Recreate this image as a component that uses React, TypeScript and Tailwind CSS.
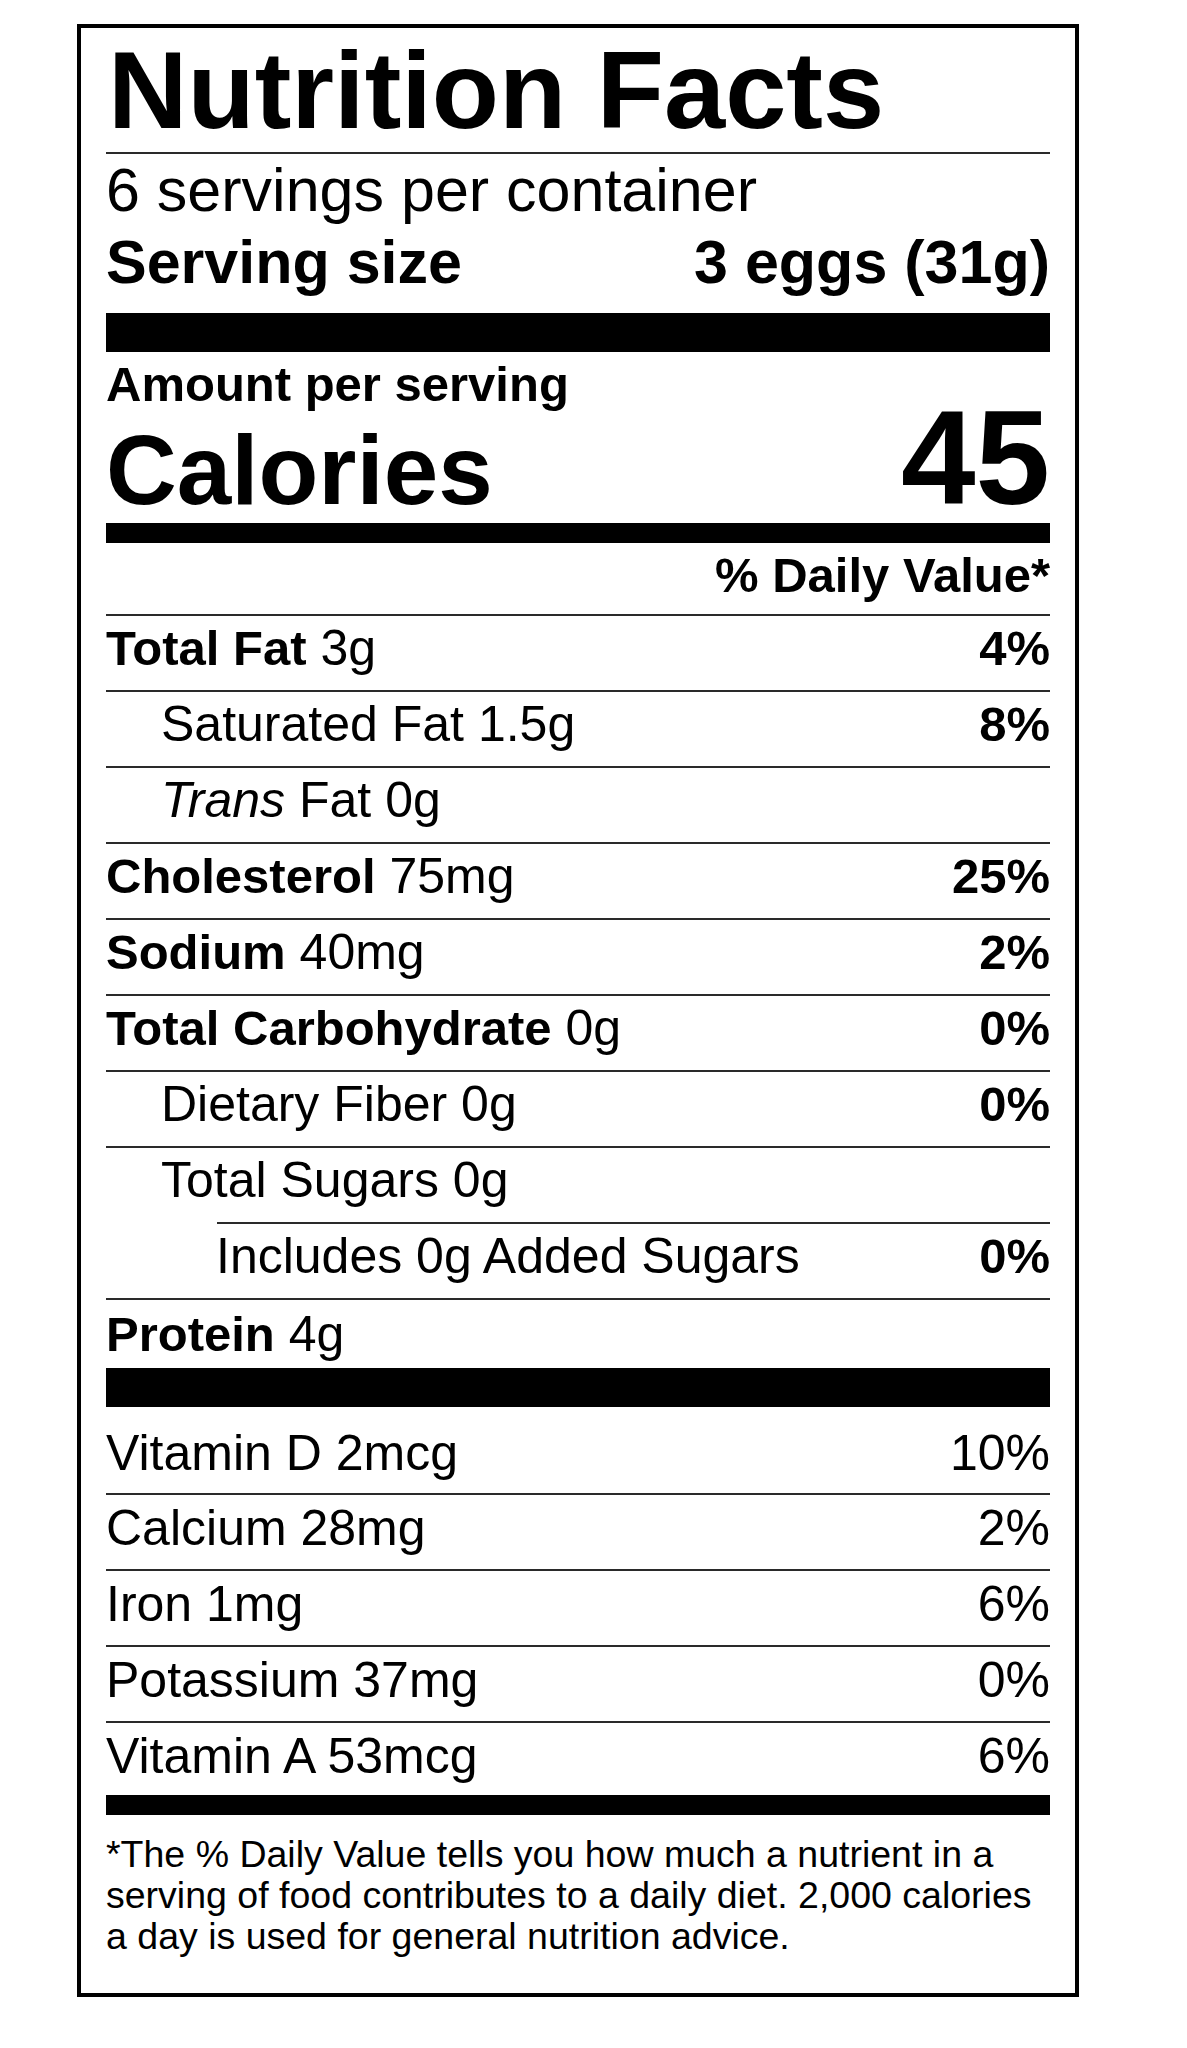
import type { ReactNode } from "react";

type Nutrient = {
  label: ReactNode;
  amount?: string;
  dv?: string;
  bold?: boolean;
  indent?: 0 | 1 | 2;
};

const nutrients: Nutrient[] = [
  { label: "Total Fat", amount: "3g", dv: "4%", bold: true },
  { label: "Saturated Fat", amount: "1.5g", dv: "8%", indent: 1 },
  { label: <><i>Trans</i> Fat</>, amount: "0g", indent: 1 },
  { label: "Cholesterol", amount: "75mg", dv: "25%", bold: true },
  { label: "Sodium", amount: "40mg", dv: "2%", bold: true },
  { label: "Total Carbohydrate", amount: "0g", dv: "0%", bold: true },
  { label: "Dietary Fiber", amount: "0g", dv: "0%", indent: 1 },
  { label: "Total Sugars", amount: "0g", indent: 1 },
  { label: "Includes 0g Added Sugars", dv: "0%", indent: 2 },
];

const vitamins = [
  { label: "Calcium 28mg", dv: "2%" },
  { label: "Iron 1mg", dv: "6%" },
  { label: "Potassium 37mg", dv: "0%" },
];

function Rule({ indent = 0 }: { indent?: number }) {
  return <div className={`h-[2px] bg-[#2a2a2a] ${indent === 2 ? "ml-[111px]" : ""}`} />;
}

function NutrientRow({ n }: { n: Nutrient }) {
  const pad = n.indent === 2 ? "pl-[110px]" : n.indent === 1 ? "pl-[55px]" : "";
  return (
    <>
      <Rule indent={n.indent} />
      <div className={`flex h-[74px] justify-between whitespace-nowrap leading-[64px] ${pad}`}>
        <span>
          {n.bold ? <span className="text-[49px] font-bold">{n.label}</span> : <span className="text-[50px]">{n.label}</span>}
          {n.amount && <span className="text-[50px]"> {n.amount}</span>}
        </span>
        {n.dv && <span className="text-[49px] font-bold">{n.dv}</span>}
      </div>
    </>
  );
}

export default function App() {
  return (
    <div className="min-h-screen bg-white font-['Liberation_Sans',Arial,sans-serif] text-black">
      <div className="pl-[77px] pt-[24px]">
        <section className="w-[1002px] border-4 border-black pb-[36px] pl-[25px] pr-[25px] pt-[8px]">
          <h1 className="ml-[2px] whitespace-nowrap text-[110px] font-bold leading-[108px]">Nutrition Facts</h1>
          <div className="mt-[8px] h-[2px] bg-[#2a2a2a]" />
          <p className="mt-[6px] text-[61px] leading-[60px]">6 servings per container</p>
          <div className="mt-[12px] flex items-baseline justify-between text-[61px] font-bold leading-[60px]">
            <span>Serving size</span>
            <span>3 eggs (31g)</span>
          </div>

          <div className="mt-[21px] h-[39px] bg-black" />

          <p className="mt-[8px] text-[49px] font-bold leading-[48px]">Amount per serving</p>
          <div className="flex h-[100px] items-baseline justify-between font-bold">
            <span className="text-[98px] leading-[100px]">Calories</span>
            <span className="text-[134px] leading-[100px]">45</span>
          </div>

          <div className="mt-[15px] h-[20px] bg-black" />

          <p className="mt-[8px] text-right text-[49px] font-bold leading-[48px]">% Daily Value*</p>
          <div className="mt-[15px]" />

          {nutrients.map((n, i) => (
            <NutrientRow key={i} n={n} />
          ))}

          <Rule />
          <div className="h-[68px] whitespace-nowrap leading-[68px]">
            <span className="text-[49px] font-bold">Protein</span>
            <span className="text-[50px]"> 4g</span>
          </div>

          <div className="h-[39px] bg-black" />

          <div className="flex h-[86px] justify-between pt-[16px] text-[50px] leading-[60px]">
            <span>Vitamin D 2mcg</span>
            <span>10%</span>
          </div>
          {vitamins.map((v) => (
            <div key={v.label}>
              <Rule />
              <div className="flex h-[74px] justify-between text-[50px] leading-[66px]">
                <span>{v.label}</span>
                <span>{v.dv}</span>
              </div>
            </div>
          ))}
          <Rule />
          <div className="flex h-[72px] justify-between text-[50px] leading-[66px]">
            <span>Vitamin A 53mcg</span>
            <span>6%</span>
          </div>

          <div className="h-[20px] bg-black" />

          <p className="mt-[19px] whitespace-nowrap text-[37.5px] leading-[41px]">
            <span className="block">*The % Daily Value tells you how much a nutrient in a</span>
            <span className="block">serving of food contributes to a daily diet. 2,000 calories</span>
            <span className="block">a day is used for general nutrition advice.</span>
          </p>
        </section>
      </div>
    </div>
  );
}
